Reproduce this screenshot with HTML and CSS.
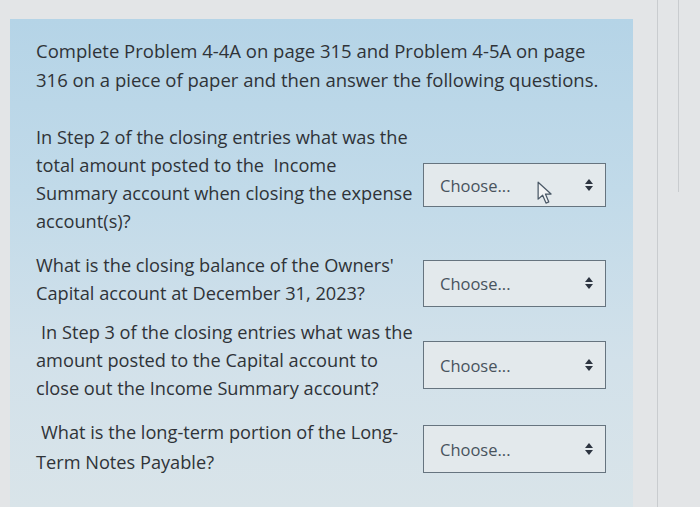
FILE: index.html
```html
<!DOCTYPE html>
<html>
<head>
<meta charset="utf-8">
<link rel="stylesheet" href="styles.css">
</head>
<body>
<div class="page">
  <div class="panel">
    <p class="intro">Complete Problem 4-4A on page 315 and Problem 4-5A on page<br>316 on a piece of paper and then answer the following questions.</p>
    <div class="rows">
      <div class="row r1">
        <div class="q">In Step 2 of the closing entries what was the<br>total amount posted to the&nbsp; Income<br>Summary account when closing the expense<br>account(s)?</div>
        <div class="sel"><span class="ph">Choose...</span>
          <svg class="cursor" width="18" height="25" viewBox="0 0 16 22"><path d="M1 1 L1 16 L5 12.5 L8 19.5 L10.5 18.5 L7.5 11.5 L12.5 11.5 Z" fill="#f2f4f5" stroke="#4a5866" stroke-width="1.1" stroke-linejoin="round"/></svg>
          <span class="arr"></span></div>
      </div>
      <div class="row r2">
        <div class="q">What is the closing balance of the Owners'<br>Capital account at December 31, 2023?</div>
        <div class="sel"><span class="ph">Choose...</span><span class="arr"></span></div>
      </div>
      <div class="row r3">
        <div class="q"><span class="ind">In Step 3 of the closing entries what was the</span><br>amount posted to the Capital account to<br>close out the Income Summary account?</div>
        <div class="sel"><span class="ph">Choose...</span><span class="arr"></span></div>
      </div>
      <div class="row r4">
        <div class="q"><span class="ind">What is the long-term portion of the Long-</span><br>Term Notes Payable?</div>
        <div class="sel"><span class="ph">Choose...</span><span class="arr"></span></div>
      </div>
    </div>
  </div>
  <div class="rail">
    <div class="railbox"></div>
  </div>
</div>
</body>
</html>
```
FILE: styles.css
```css
html, body {
  margin: 0;
  padding: 0;
  width: 700px;
  height: 507px;
  overflow: hidden;
  background: #e3e5e7;
  font-family: "Open Sans", "Noto Sans", sans-serif;
}
.page {
  display: flex;
  align-items: flex-start;
  height: 507px;
}
.panel {
  margin-left: 10px;
  margin-top: 19px;
  width: 623px;
  height: 488px;
  background: linear-gradient(180deg, #b5d4e7 0%, #c1dae9 35%, #d2e1ea 70%, #d9e4e9 100%);
  padding: 17px 0 0 26px;
  box-sizing: border-box;
  color: #2f3338;
}
.intro {
  margin: 0;
  font-size: 18.5px;
  line-height: 29px;
}
.rows {
  margin-top: 29px;
  display: flex;
  flex-direction: column;
}
.row {
  display: grid;
  grid-template-columns: 387px 183px;
  align-items: center;
}
.r2 { margin-top: 16px; }
.r3 { margin-top: 11px; }
.r4 { margin-top: 15px; }
.q {
  font-size: 18.2px;
  line-height: 28px;
}
.r4 .q { line-height: 30px; }
.ind {
  padding-left: 5px;
}
.sel {
  position: relative;
  height: 44px;
  box-sizing: border-box;
  border: 1.5px solid #66747f;
  background: #e3e9ec;
  display: flex;
  align-items: center;
  padding-left: 16px;
  margin-top: 12px;
}
.r2 .sel { height: 47px; margin-top: 8px; }
.r3 .sel { height: 48px; margin-top: 10px; }
.r4 .sel { height: 48px; margin-top: 4px; }
.ph {
  font-size: 16.5px;
  color: #48535d;
  flex: 1;
}
.arr {
  width: 8px;
  height: 12px;
  margin-right: 12px;
  position: relative;
}
.arr::before, .arr::after {
  content: "";
  position: absolute;
  left: 0;
  border-left: 4px solid transparent;
  border-right: 4px solid transparent;
}
.arr::before {
  top: 0;
  border-bottom: 5px solid #2c3440;
}
.arr::after {
  bottom: 0;
  border-top: 5px solid #2c3440;
}
.cursor {
  position: absolute;
  left: 113px;
  top: 17px;
}
.rail {
  margin-left: 24px;
  width: 21px;
  height: 507px;
  border-left: 1px solid #c9cccf;
}
.railbox {
  margin-left: 20px;
  height: 191px;
  border-left: 1px solid #c9cccf;
  border-bottom: 1px solid #c9cccf;
}
```
